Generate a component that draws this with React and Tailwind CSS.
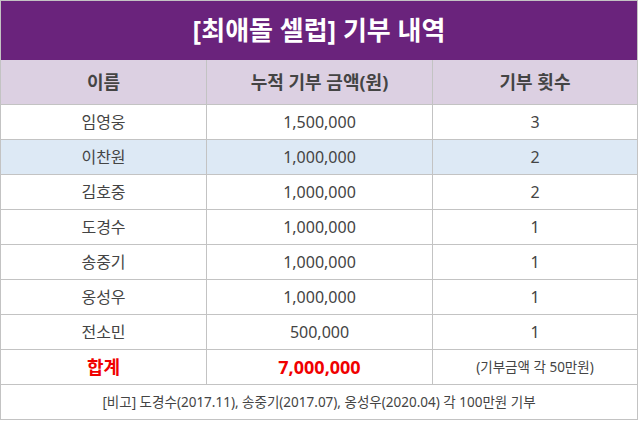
import React from "react";

const rows = [
  ["임영웅", "1,500,000", "3"],
  ["이찬원", "1,000,000", "2", true],
  ["김호중", "1,000,000", "2"],
  ["도경수", "1,000,000", "1"],
  ["송중기", "1,000,000", "1"],
  ["옹성우", "1,000,000", "1"],
  ["전소민", "500,000", "1"],
];

const cell = "flex items-center justify-center border-b border-[#c3c3c3]";

export default function App() {
  return (
    <div className="w-[639px] h-[421px] bg-white font-['Noto_Sans','Noto_Sans_CJK_KR',sans-serif]">
      <div className="w-[638px] border border-[#c3c3c3]">
        <div className="h-[59px] bg-[#6a237c] flex items-center justify-center text-white text-[26px] font-bold">
          [최애돌 셀럽] 기부 내역
        </div>
        <div className="grid grid-cols-[206px_226px_1fr] bg-[#dcd0e2] text-[#444] text-[18px] font-bold">
          <div className={`${cell} h-[45px] border-r`}>이름</div>
          <div className={`${cell} h-[45px] border-r`}>누적 기부 금액(원)</div>
          <div className={`${cell} h-[45px]`}>기부 횟수</div>
        </div>
        {rows.map(([name, amount, count, hl]) => (
          <div
            key={name}
            className={`grid grid-cols-[206px_226px_1fr] text-[#444] text-[16px] ${hl ? "bg-[#dde9f5]" : "bg-white"}`}
          >
            <div className={`${cell} h-[35px] border-r`}>{name}</div>
            <div className={`${cell} h-[35px] border-r`}>{amount}</div>
            <div className={`${cell} h-[35px]`}>{count}</div>
          </div>
        ))}
        <div className="grid grid-cols-[206px_226px_1fr]">
          <div className={`${cell} h-[35px] border-r text-[#f00000] text-[18px] font-bold`}>합계</div>
          <div className={`${cell} h-[35px] border-r text-[#f00000] text-[18px] font-bold`}>7,000,000</div>
          <div className={`${cell} h-[35px] text-[#444] text-[13.5px]`}>(기부금액 각 50만원)</div>
        </div>
        <div className="h-[34px] flex items-center justify-center text-[#444] text-[13.5px]">
          [비고] 도경수(2017.11), 송중기(2017.07), 옹성우(2020.04) 각 100만원 기부
        </div>
      </div>
    </div>
  );
}
